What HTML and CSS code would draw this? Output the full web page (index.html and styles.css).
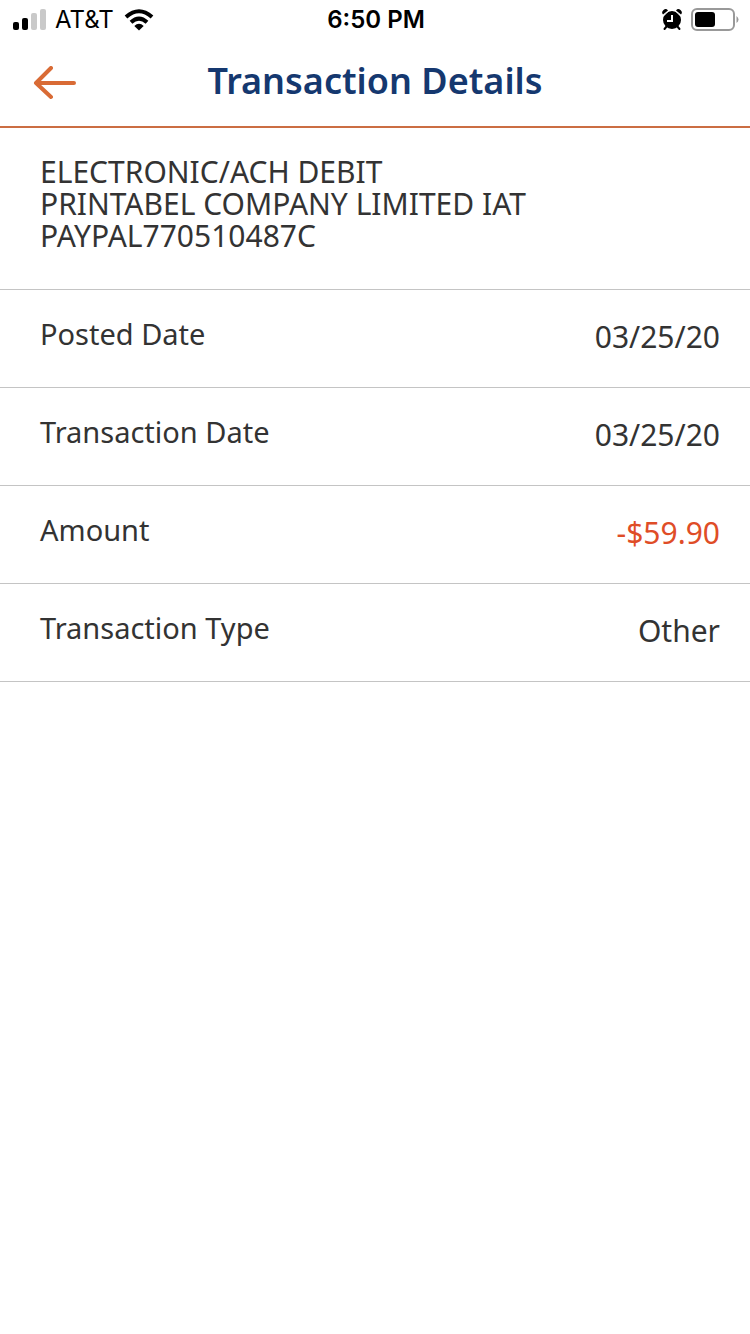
FILE: index.html
```
<!DOCTYPE html>
<html lang="en">
<head>
    <meta charset="UTF-8">
    <meta name="viewport" content="width=device-width, initial-scale=1.0">
    <title>Transaction Details</title>
    <link rel="stylesheet" href="styles.css">
</head>
<body>
    <div class="status-bar">
        <div class="status-left">
            <svg class="signal-icon" width="34" height="22" viewBox="0 0 34 22" aria-hidden="true">
                <rect x="0" y="13" width="6" height="8" rx="2"/>
                <rect x="9" y="9" width="6" height="12" rx="2"/>
                <rect x="18" y="4" width="6" height="17" rx="2" fill="#c9c9c9"/>
                <rect x="27" y="0" width="6" height="21" rx="2" fill="#c9c9c9"/>
            </svg>
            <span class="carrier">AT&amp;T</span>
            <svg class="wifi-icon" width="30" height="22" viewBox="0 0 30 22" aria-hidden="true">
                <path d="M2 8Q15-3.500 28 8" fill="none" stroke="#000" stroke-width="4"/>
                <path d="M7 13.300Q15 6 23 13.300" fill="none" stroke="#000" stroke-width="4"/>
                <path d="M10.300 17Q15 12.600 19.700 17L15 21.500Z"/>
            </svg>
        </div>
        <span class="time">6:50 PM</span>
        <div class="status-right">
            <svg class="alarm-icon" width="20" height="22" viewBox="0 0 20 22" aria-hidden="true">
                <circle cx="10" cy="11" r="9"/>
                <path d="M5 17L2.500 20M15 17L17.500 20" stroke="#000" stroke-width="2" stroke-linecap="round"/>
                <path d="M2 6.500L6.500 2M18 6.500L13.500 2" fill="none" stroke="#fff" stroke-width="1"/>
                <path d="M1 5.500A3 3 0 0 1 6 1.500ZM19 5.500A3 3 0 0 0 14 1.500Z"/>
                <path d="M10 6V12H5" fill="none" stroke="#fff" stroke-width="2"/>
            </svg>
            <svg class="battery-icon" width="48" height="24" viewBox="0 0 48 24" aria-hidden="true">
                <rect x="1" y="1" width="42" height="21" rx="5" fill="none" stroke="#999" stroke-width="2"/>
                <rect x="4" y="4" width="20" height="15" rx="3"/>
                <path d="M45.500 8Q47.500 9.500 47.500 11.500T45.500 15Z" fill="#999"/>
            </svg>
        </div>
    </div>

    <header class="header">
        <button type="button" class="back-btn" aria-label="Back">
            <svg width="44" height="34" viewBox="0 0 44 34" aria-hidden="true">
                <path d="M41 17H3M18 2L3 17L18 31" fill="none" stroke="#d96b35" stroke-width="4" stroke-linecap="round" stroke-linejoin="round"/>
            </svg>
        </button>
        <h1>Transaction Details</h1>
    </header>

    <main>
        <p class="description">
            ELECTRONIC/ACH DEBIT<br>
            PRINTABEL COMPANY LIMITED IAT<br>
            PAYPAL770510487C
        </p>
        <dl class="details">
            <div class="detail-row">
                <dt>Posted Date</dt>
                <dd>03/25/20</dd>
            </div>
            <div class="detail-row">
                <dt>Transaction Date</dt>
                <dd>03/25/20</dd>
            </div>
            <div class="detail-row">
                <dt>Amount</dt>
                <dd class="negative">-$59.90</dd>
            </div>
            <div class="detail-row">
                <dt>Transaction Type</dt>
                <dd>Other</dd>
            </div>
        </dl>
    </main>
</body>
</html>
```
FILE: styles.css
```
* {
    margin: 0;
    padding: 0;
    box-sizing: border-box;
}

body {
    background-color: #fff;
    color: #333;
    font-family: 'Noto Sans', 'Open Sans', sans-serif;
    font-size: 30px;
    line-height: 32px;
}

.status-bar {
    display: grid;
    grid-template-columns: 1fr auto 1fr;
    align-items: center;
    height: 40px;
    padding: 0 11px 0 13px;
    color: #000;
    font-family: Inter, 'Liberation Sans', sans-serif;
    font-size: 24px;
}

.status-left,
.status-right {
    display: flex;
    align-items: center;
}

.status-left {
    gap: 8px;
}

.status-right {
    justify-content: flex-end;
    gap: 9px;
}

.wifi-icon {
    margin-left: 2px;
}

.time {
    font-weight: 600;
}

.header {
    display: grid;
    grid-template-columns: 1fr auto 1fr;
    align-items: center;
    height: 88px;
    padding: 0 33px;
    border-bottom: 2px solid #cb6d43;
}

.header h1 {
    padding-bottom: 4px;
    color: #15386f;
    font-size: 36px;
    font-weight: 600;
    line-height: 48px;
}

.back-btn {
    justify-self: start;
    border: none;
    background: none;
    cursor: pointer;
}

.back-btn svg {
    display: block;
}

.description {
    padding: 28px 40px 37px;
    border-bottom: 1px solid #c4c4c4;
}

.detail-row {
    display: flex;
    justify-content: space-between;
    padding: 28px 30px 34px 40px;
    border-bottom: 1px solid #c4c4c4;
}

.detail-row dt {
    font-size: 29px;
}

.detail-row dd {
    padding-top: 3px;
}

.negative {
    color: #df4d27;
}
```
